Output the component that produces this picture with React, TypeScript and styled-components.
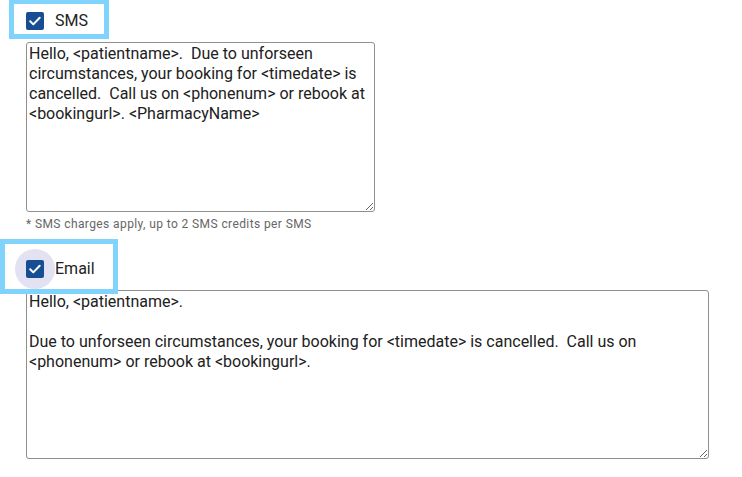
import React from "react";
import styled, { createGlobalStyle } from "styled-components";

const Global = createGlobalStyle`
  html, body { margin: 0; padding: 0; background: #fff; }
  body { font-family: Roboto, "Liberation Sans", Arial, sans-serif; color: #212121; }
`;

const Page = styled.div`
  padding-left: 26px;
  display: flex;
  flex-direction: column;
  width: 742px;
  box-sizing: border-box;
`;

const Section = styled.div<{ $top?: number }>`
  display: flex;
  flex-direction: column;
  margin-top: ${(p) => p.$top ?? 0}px;
`;

const CheckRow = styled.label`
  position: relative;
  display: flex;
  align-items: center;
  height: 42px;
  margin-left: -12px;
  cursor: pointer;
`;

const CheckRoot = styled.span<{ $focused?: boolean }>`
  position: relative;
  width: 42px;
  height: 42px;
  display: flex;
  align-items: center;
  justify-content: center;
  flex-shrink: 0;
  &::before {
    content: "";
    position: absolute;
    left: 1px;
    top: 1px;
    width: 40px;
    height: 40px;
    border-radius: 50%;
    background: ${(p) => (p.$focused ? "#e2e2f2" : "transparent")};
  }
  svg { position: relative; }
`;

const LabelText = styled.span`
  font-size: 16px;
  line-height: 20px;
  color: #222;
  margin-left: -1px;
`;

const Highlight = styled.span<{ $l: number; $t: number; $w: number; $h: number }>`
  position: absolute;
  left: ${(p) => p.$l}px;
  top: ${(p) => p.$t}px;
  width: ${(p) => p.$w}px;
  height: ${(p) => p.$h}px;
  border: 5px solid #80d3fd;
  box-sizing: border-box;
  pointer-events: none;
  z-index: 2;
`;

const Area = styled.textarea<{ $w: number; $h: number }>`
  width: ${(p) => p.$w}px;
  height: ${(p) => p.$h}px;
  box-sizing: border-box;
  border: 1px solid #8f8f8f;
  border-radius: 3px;
  padding: 1px 2px;
  font-family: Roboto, "Liberation Sans", Arial, sans-serif;
  font-size: 16px;
  line-height: 20px;
  color: #212121;
  resize: both;
  outline: none;
  margin: 0;
  display: block;
`;

const Helper = styled.div`
  margin-top: 4px;
  font-size: 12px;
  line-height: 16px;
  letter-spacing: 0.4px;
  color: #666;
`;

const Box = () => (
  <svg width="24" height="24" viewBox="0 0 24 24">
    <rect x="3" y="3" width="18" height="18" rx="2" fill="#174d92" />
    <path d="M7.2 12.3l3.1 3.1 6.4-6.6" fill="none" stroke="#fff" strokeWidth="2" strokeLinecap="round" strokeLinejoin="round" />
  </svg>
);

const smsText =
  "Hello, <patientname>.  Due to unforseen circumstances, your booking for <timedate> is cancelled.  Call us on <phonenum> or rebook at <bookingurl>. <PharmacyName>";
const emailText =
  "Hello, <patientname>.\n\nDue to unforseen circumstances, your booking for <timedate> is cancelled.  Call us on <phonenum> or rebook at <bookingurl>.";

export default function App() {
  return (
    <>
      <Global />
      <Page>
        <Section>
          <CheckRow>
            <Highlight $l={-5} $t={-1} $w={100} $h={40} />
            <CheckRoot>
              <Box />
            </CheckRoot>
            <LabelText>SMS</LabelText>
          </CheckRow>
          <Area $w={349} $h={170} defaultValue={smsText} />
          <Helper>* SMS charges apply, up to 2 SMS credits per SMS</Helper>
        </Section>
        <Section $top={16}>
          <CheckRow>
            <Highlight $l={-14} $t={-9} $w={118} $h={55} />
            <CheckRoot $focused>
              <Box />
            </CheckRoot>
            <LabelText>Email</LabelText>
          </CheckRow>
          <Area $w={683} $h={169} defaultValue={emailText} />
        </Section>
      </Page>
    </>
  );
}
